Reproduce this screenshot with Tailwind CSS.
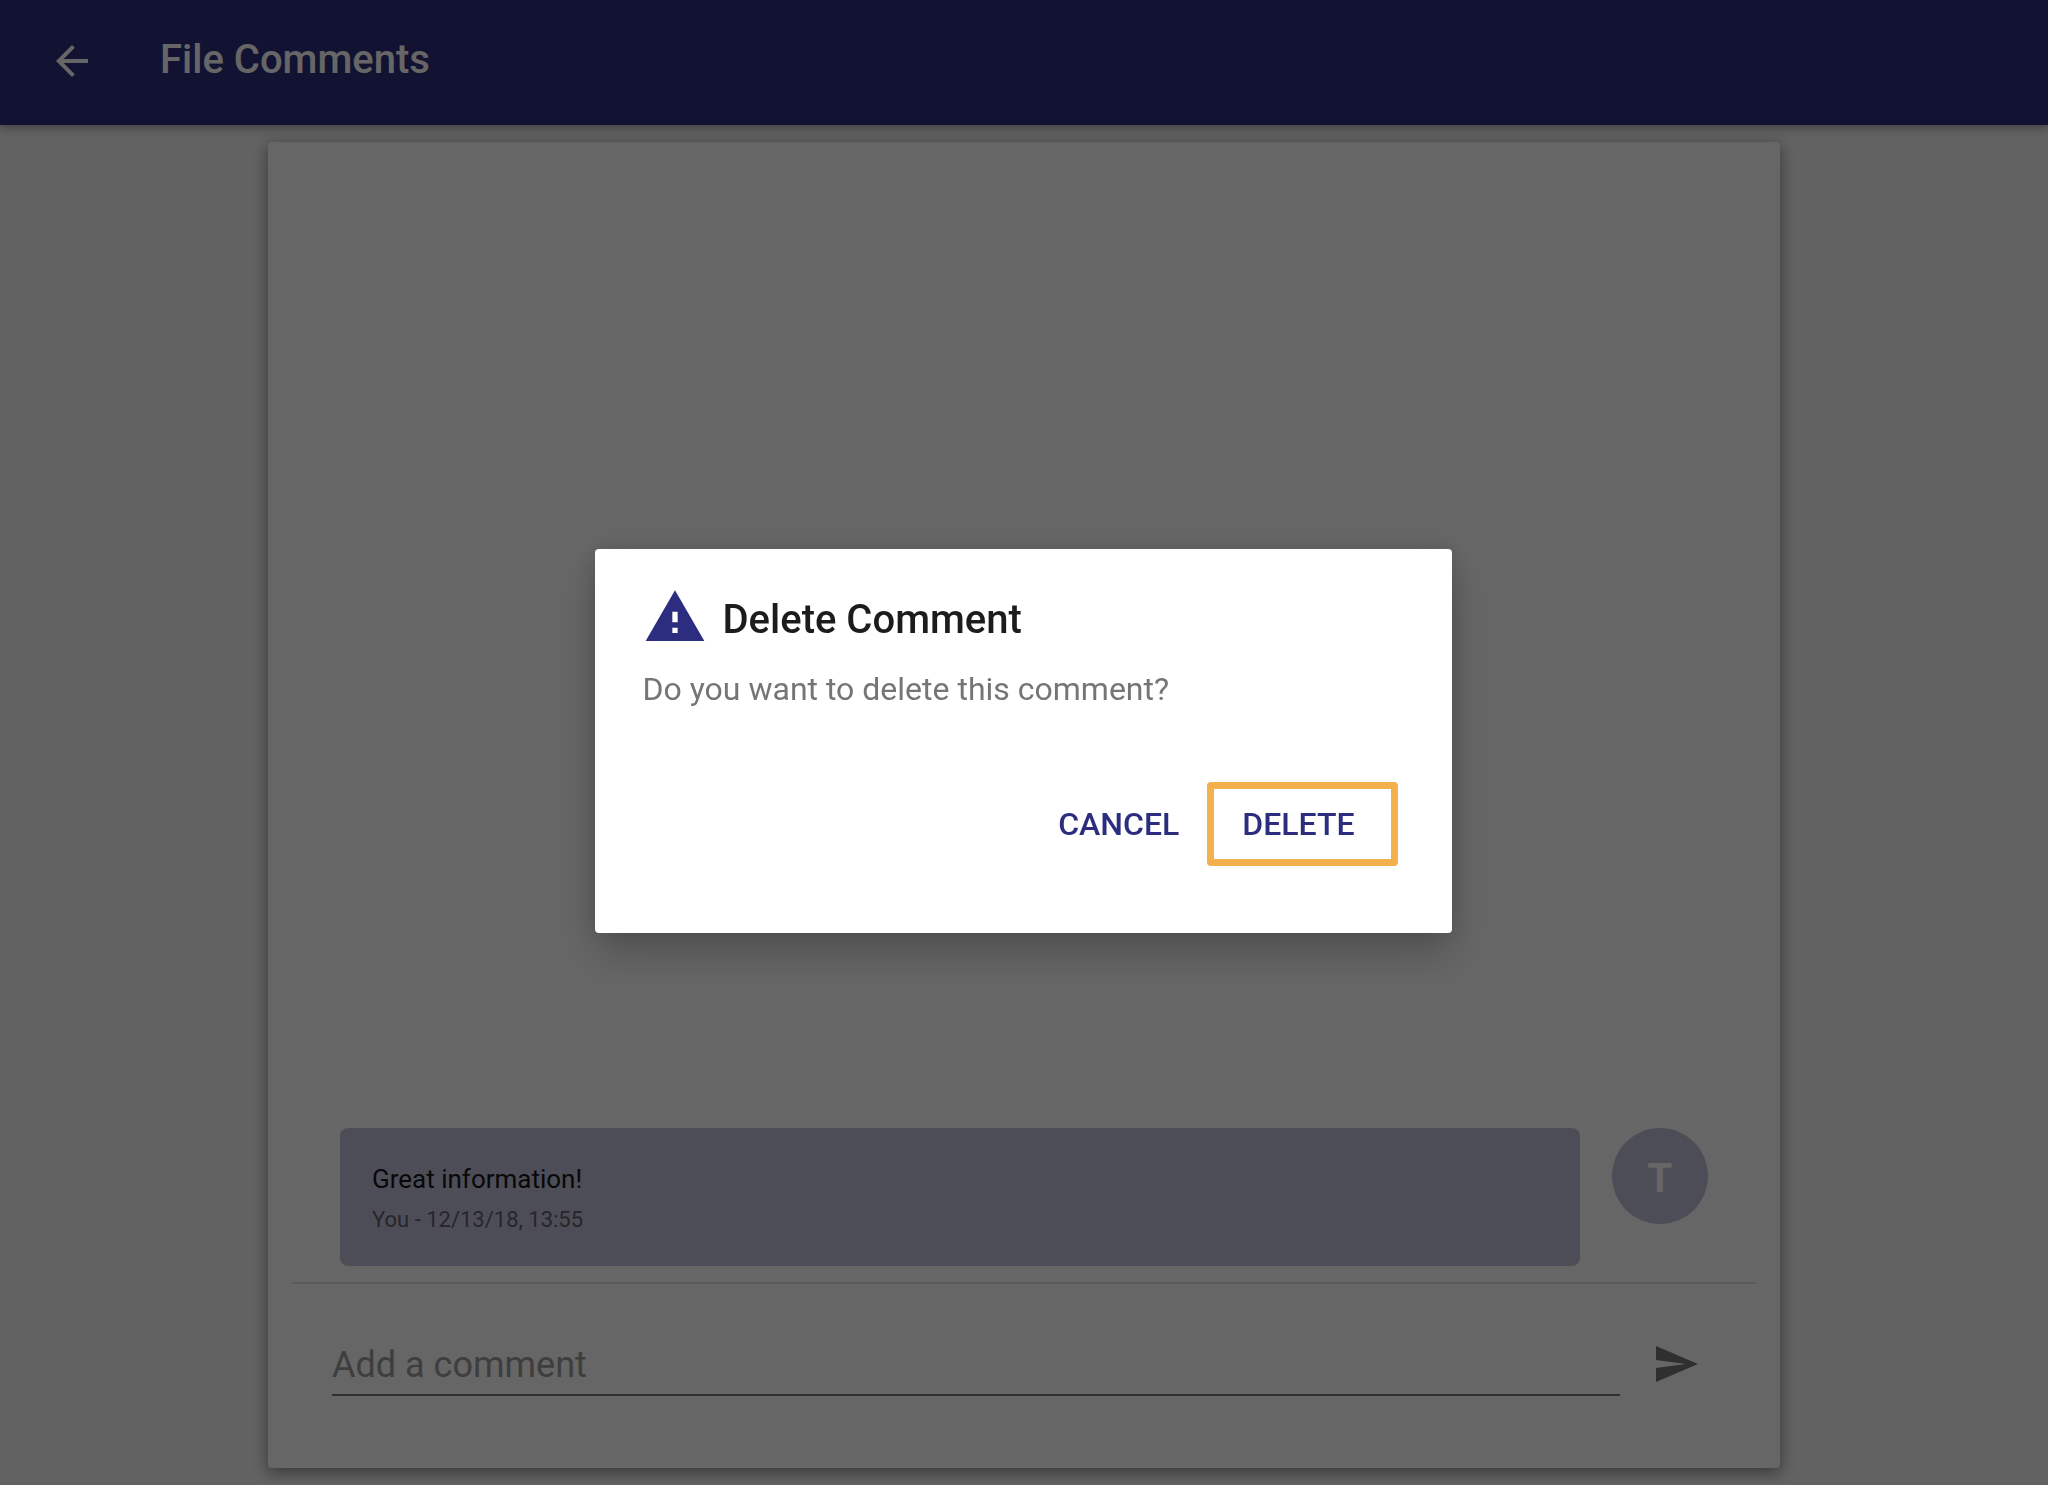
<!DOCTYPE html>
<html lang="en">
<head>
<meta charset="utf-8">
<meta name="viewport" content="width=device-width, initial-scale=1">
<title>File Comments</title>
<script src="https://cdn.jsdelivr.net/npm/@tailwindcss/browser@4"></script>
</head>
<body class="flex min-h-screen flex-col bg-[#f5f5f5] font-[Roboto,sans-serif]">
  <header class="z-10 flex items-start gap-16 bg-[#2d2d80] px-12 pt-[37px] pb-10 text-white shadow-[0_2px_10px_rgba(0,0,0,0.4)]">
    <button type="button" aria-label="Back" class="size-12">
      <svg viewBox="0 0 24 24" class="size-12" fill="currentColor" aria-hidden="true"><path d="M20 11H7.83l5.59-5.59L12 4l-8 8 8 8 1.41-1.41L7.83 13H20v-2z"/></svg>
    </button>
    <h1 class="text-[40px] leading-[46px] font-medium">File Comments</h1>
  </header>

  <main class="mx-auto my-[17px] flex w-full max-w-[1512px] flex-1 flex-col justify-end rounded bg-white shadow-[0_4px_16px_rgba(0,0,0,0.45)]">
    <ul class="px-[72px] pb-4">
      <li class="flex items-start gap-8">
        <article class="flex-1 rounded-lg bg-[#c1c1da] p-8">
          <p class="text-[26px] leading-[38px] text-[#141414]">Great information!</p>
          <p class="pt-2 text-[22px] leading-7 text-[#606066]">You - 12/13/18, 13:55</p>
        </article>
        <span class="flex size-24 items-center justify-center rounded-full bg-[#c1c1da] pt-1.5 text-[40px] leading-[46px] font-bold text-white">T</span>
      </li>
    </ul>
    <form class="mx-6 flex items-start gap-8 border-t-2 border-[#e0e0e0] px-10 pt-14 pb-[72px]">
      <input type="text" aria-label="Add a comment" placeholder="Add a comment" class="h-14 min-w-0 flex-1 border-b-2 border-[#757575] pb-1 text-4xl outline-none placeholder:text-[#9c9c9c]">
      <button type="button" aria-label="Send" class="mr-4 size-12 text-[#757575]">
        <svg viewBox="0 0 24 24" class="size-12" fill="currentColor" aria-hidden="true"><path d="M2 21l21-9L2 3v7l15 2-15 2z"/></svg>
      </button>
    </form>
  </main>

  <div class="fixed inset-0 z-20 flex items-center justify-center bg-black/60 pr-0.5 pb-1">
    <section role="dialog" aria-modal="true" aria-labelledby="dialog-title" class="w-full max-w-[857px] rounded bg-white px-12 pt-9 pb-[67px] shadow-[0_22px_42px_rgba(0,0,0,0.2),0_0_24px_rgba(0,0,0,0.14)]">
      <div class="flex items-center gap-4">
        <svg viewBox="0 0 24 24" class="size-16 text-[#2d2d80]" fill="currentColor" aria-hidden="true"><path d="M1 21h22L12 2 1 21zm12-3h-2v-2h2v2zm0-4h-2v-4h2v4z"/></svg>
        <h2 id="dialog-title" class="pt-1.5 text-[40px] leading-[46px] font-medium text-[#1c1c1c]">Delete Comment</h2>
      </div>
      <p class="pt-5 text-[32px] leading-10 text-[#757575]">Do you want to delete this comment?</p>
      <div class="mr-1.5 flex justify-end gap-3 pt-[73px] text-[32px] font-medium text-[#2d2d80]">
        <button type="button" class="h-[84px] px-4">CANCEL</button>
        <button type="button" class="h-[84px] rounded border-7 border-[#f5b04e] pr-9 pl-7">DELETE</button>
      </div>
    </section>
  </div>
</body>
</html>
